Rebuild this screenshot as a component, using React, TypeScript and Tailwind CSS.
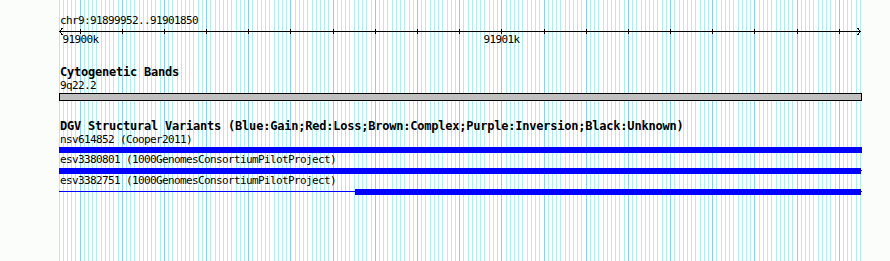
const START = 91899952;
const END = 91901850;
const SCALE = 0.4218;

// bp -> pixel inside the track panel
const px = (bp: number) => Math.round((bp - START) * SCALE + 0.3);

const gridLines: { x: number; major: boolean }[] = [{ x: 0, major: false }];
for (let bp = 91899960; bp <= END; bp += 10) {
  gridLines.push({ x: px(bp), major: bp % 100 === 0 });
}

const ticks: number[] = [];
for (let bp = 91900000; bp <= END; bp += 100) ticks.push(px(bp));

const axisLabels = [
  { bp: 91900000, text: "91900k" },
  { bp: 91901000, text: "91901k" },
];

const Grid = () => (
  <svg className="absolute inset-0" width={803} height={261} shapeRendering="crispEdges">
    {gridLines
      .filter((l) => !l.major)
      .map((l, i) => (
        <rect key={`m${i}`} x={l.x} y={0} width={1} height={261} fill="#afeeee" />
      ))}
    {gridLines
      .filter((l) => l.major)
      .map((l, i) => (
        <rect key={`M${i}`} x={l.x} y={0} width={1} height={261} fill="#87cefa" />
      ))}
  </svg>
);

const Ruler = () => (
  <div className="flex flex-col">
    <svg width={803} height={8} shapeRendering="crispEdges">
      <rect x={0} y={4} width={802} height={1} fill="#000" />
      {ticks.map((x, i) => (
        <rect key={i} x={x} y={2} width={1} height={5} fill="#000" />
      ))}
      <polyline points="3.5,1 0.5,4.5 3.5,8" fill="none" stroke="#000" strokeWidth={1} />
      <polyline points="798.5,1 801.5,4.5 798.5,8" fill="none" stroke="#000" strokeWidth={1} />
    </svg>
    <div className="relative h-[13px] -mt-[2px] leading-[13px]">
      {axisLabels.map((l) => (
        <span
          key={l.text}
          className="absolute top-0 -translate-x-1/2 whitespace-nowrap"
          style={{ left: px(l.bp) + 0.5 }}
        >
          {l.text}
        </span>
      ))}
    </div>
  </div>
);

const variants = [
  { label: "nsv614852 (Cooper2011)", kind: "full" },
  { label: "esv3380801 (1000GenomesConsortiumPilotProject)", kind: "stub" },
  { label: "esv3382751 (1000GenomesConsortiumPilotProject)", kind: "partial" },
];

const VariantBar = ({ kind }: { kind: string }) => {
  if (kind === "full") return <div className="h-[6px] w-[803px] bg-[#0000ff]" />;
  if (kind === "stub")
    return (
      <div className="flex h-[6px]">
        <div className="w-[802px] bg-[#0000ff]" />
        <div className="w-[1px] h-[1px] mt-[2px] bg-[#0000ff]" />
      </div>
    );
  return (
    <div className="flex h-[6px]">
      <div className="w-[296px] h-[1px] mt-[2px] bg-[#0000ff]" />
      <div className="w-[506px] bg-[#0000ff]" />
      <div className="w-[1px] h-[1px] mt-[2px] bg-[#0000ff]" />
    </div>
  );
};

export default function App() {
  return (
    <div className="flex w-[890px] h-[261px] overflow-hidden bg-[#fbfdfb] text-black font-['DejaVu_Sans_Mono',monospace] text-[11px] tracking-[-0.62px]">
      <div className="w-[59px] shrink-0" />
      <div className="relative w-[803px] h-full shrink-0 bg-white">
        <Grid />
        <div className="relative flex flex-col">
          <div className="mt-[14px] h-[13px] leading-[13px] pl-[1px] whitespace-nowrap">
            chr9:91899952..91901850
          </div>
          <Ruler />

          <div className="mt-[20px] h-[13px] leading-[13px] pl-[1px] text-[12px] tracking-[-0.22px] font-bold whitespace-nowrap">
            Cytogenetic Bands
          </div>
          <div className="h-[13px] leading-[13px] pl-[1px]">9q22.2</div>
          <div className="mt-[1px] h-[8px] w-[803px] border border-black bg-[#c0c0c0]" />

          <div className="mt-[20px] h-[10px] leading-[10px] pl-[1px] text-[12px] tracking-[-0.22px] font-bold whitespace-nowrap">
            DGV Structural Variants (Blue:Gain;Red:Loss;Brown:Complex;Purple:Inversion;Black:Unknown)
          </div>
          {variants.map((v, i) => (
            <div key={v.label} className="flex flex-col">
              <div
                className={
                  i === 0
                    ? "h-[16px] pt-[2px] leading-[13px] pl-[1px] whitespace-nowrap"
                    : "h-[15px] leading-[13px] pl-[1px] whitespace-nowrap"
                }
              >
                {v.label}
              </div>
              <VariantBar kind={v.kind} />
            </div>
          ))}
        </div>
      </div>
      <div className="flex-1" />
    </div>
  );
}
